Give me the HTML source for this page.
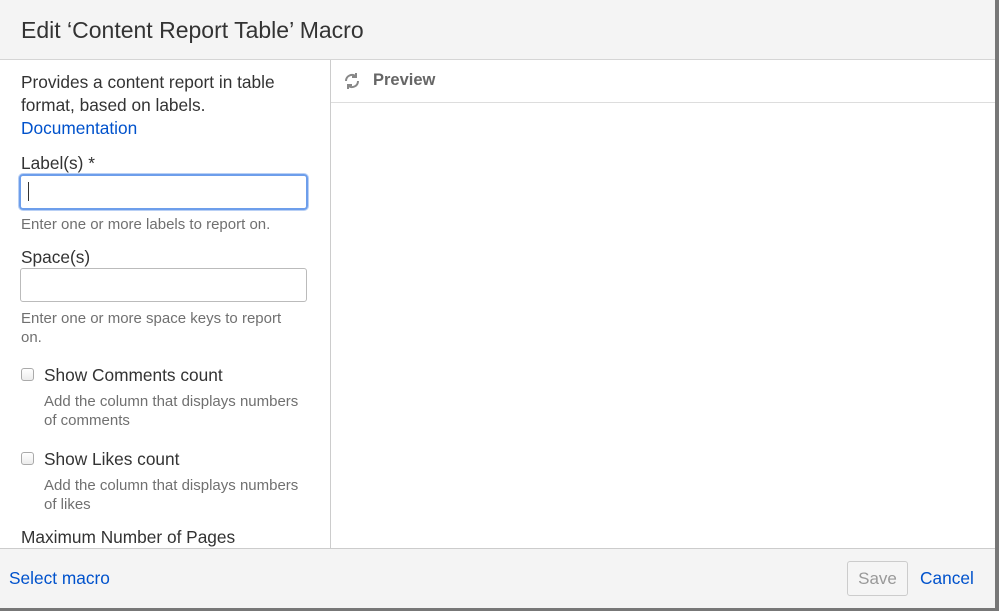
<!DOCTYPE html>
<html><head><style>
*{margin:0;padding:0;box-sizing:border-box}
body{width:999px;height:611px;background:#777;font-family:"Liberation Sans",sans-serif;color:#333;position:relative;overflow:hidden}
.d{position:absolute;left:0;top:0;width:995px;height:608px;background:#fff}
.a{position:absolute;white-space:nowrap}
.s{font-size:15px;color:#707070;line-height:19px}
.t{font-size:17.3px;line-height:23px;color:#333}
.cb{position:absolute;width:13px;height:13px;border:1px solid #aaa;border-radius:3px;background:linear-gradient(#fff,#ececec)}
</style></head><body>
<div class="d">
<div class="a" style="left:0;top:0;width:995px;height:60px;background:#f4f4f4;border-bottom:1px solid #d5d5d5"></div>
<div class="a" style="left:21px;top:17px;font-size:23px;color:#333">Edit ‘Content Report Table’ Macro</div>
<div class="a" style="left:330px;top:60px;width:1px;height:488px;background:#ccc"></div>
<div class="a" style="left:331px;top:102px;width:664px;height:1px;background:#ddd"></div>
<svg class="a" style="left:343px;top:72px" width="18" height="18" viewBox="0 0 18 18" fill="none" stroke="#888" stroke-width="2"><path d="M3 9a6 6 0 0 1 10-4.5"/><path d="M13 1v4h-4"/><path d="M15 9a6 6 0 0 1-10 4.5"/><path d="M5 17v-4h4"/></svg>
<div class="a" style="left:373px;top:71px;font-size:16.5px;font-weight:bold;color:#666">Preview</div>
<div class="a t" style="left:21px;top:71px">Provides a content report in table</div>
<div class="a t" style="left:21px;top:94px">format, based on labels.</div>
<div class="a t" style="left:21px;top:117px;color:#0052cc">Documentation</div>
<div class="a t" style="left:21px;top:152px">Label(s) *</div>
<div class="a" style="left:19px;top:174px;width:289px;height:36px;border:2px solid #6d9eeb;border-radius:4px;box-shadow:0 0 0 1px #b9d0f5"></div>
<div class="a" style="left:28px;top:182px;width:1px;height:19px;background:#333"></div>
<div class="a s" style="left:21px;top:215px">Enter one or more labels to report on.</div>
<div class="a t" style="left:21px;top:246px">Space(s)</div>
<div class="a" style="left:20px;top:268px;width:287px;height:34px;border:1px solid #bbb;border-radius:3px"></div>
<div class="a s" style="left:21px;top:309px">Enter one or more space keys to report</div>
<div class="a s" style="left:21px;top:328px">on.</div>
<div class="cb" style="left:21px;top:368px"></div>
<div class="a t" style="left:44px;top:364px">Show Comments count</div>
<div class="a s" style="left:44px;top:392px">Add the column that displays numbers</div>
<div class="a s" style="left:44px;top:411px">of comments</div>
<div class="cb" style="left:21px;top:452px"></div>
<div class="a t" style="left:44px;top:448px">Show Likes count</div>
<div class="a s" style="left:44px;top:476px">Add the column that displays numbers</div>
<div class="a s" style="left:44px;top:495px">of likes</div>
<div class="a t" style="left:21px;top:526px">Maximum Number of Pages</div>
<div class="a" style="left:0;top:548px;width:995px;height:60px;background:#f4f4f4;border-top:1px solid #ccc"></div>
<div class="a t" style="left:9px;top:567px;color:#0052cc">Select macro</div>
<div class="a" style="left:847px;top:561px;width:61px;height:35px;border:1px solid #ccc;border-radius:3px;background:#f5f5f5;font-size:17px;color:#999;text-align:center;line-height:33px">Save</div>
<div class="a t" style="left:920px;top:567px;color:#0052cc">Cancel</div>
</div>
</body></html>
